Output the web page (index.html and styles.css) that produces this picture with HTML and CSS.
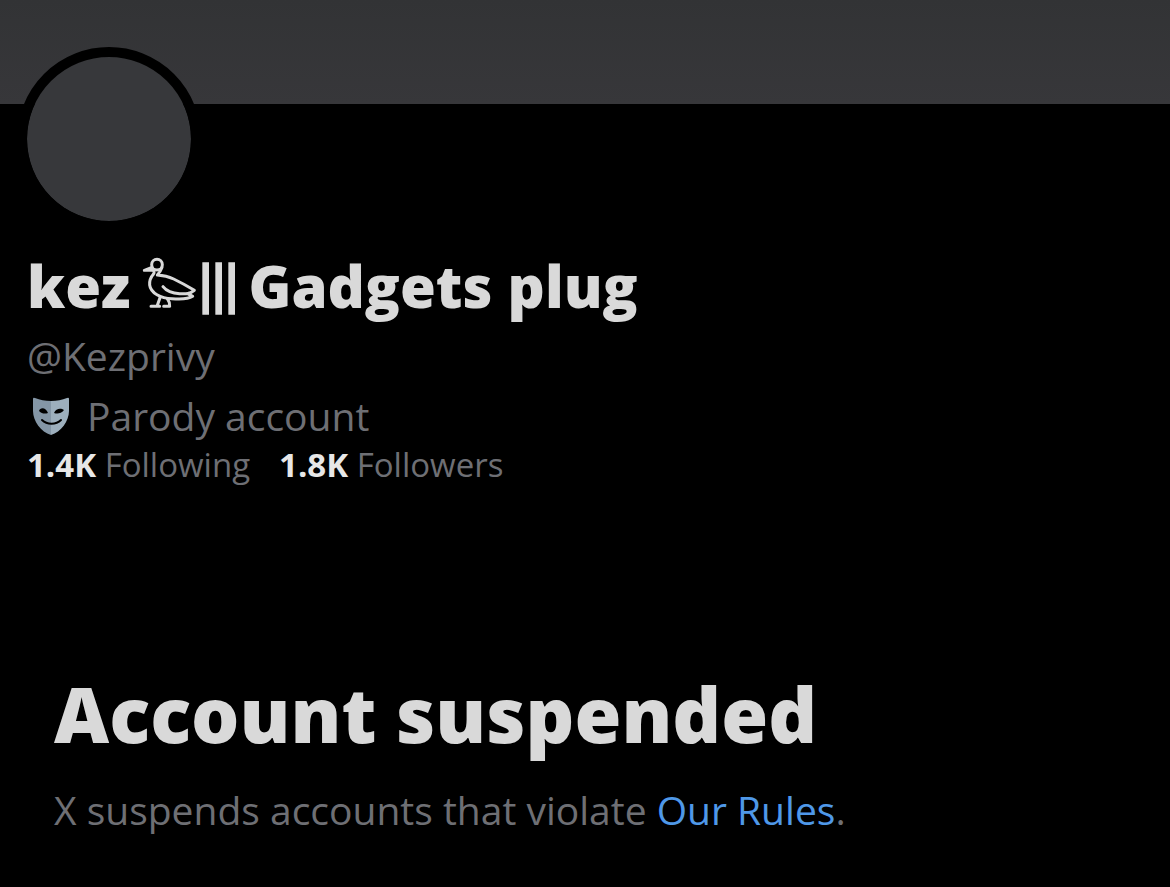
FILE: index.html
```
<!DOCTYPE html>
<html lang="en">
<head>
  <meta charset="UTF-8">
  <meta name="viewport" content="width=device-width, initial-scale=1.0">
  <title>kez Gadgets plug (@Kezprivy)</title>
  <link rel="stylesheet" href="styles.css">
</head>
<body>
  <div class="banner"></div>
  <main>
    <section class="profile">
      <div class="avatar"></div>
      <h1 class="name">
        <span>kez</span>
        <svg class="duck" viewBox="60 36 282 174" aria-hidden="true">
          <g fill="none" stroke="#d9d9d9" stroke-width="9" stroke-linecap="round" stroke-linejoin="round">
            <circle cx="105" cy="59" r="16" />
            <path d="M90 67L67 76L90 75C97 76 98 82 94 88C86 97 82 108 83 120C86 144 116 160 150 161C175 163 198 163 212 154L197 146C205 144 211 141 217 136C199 125 178 113 155 102C140 95 122 91 106 90C112 84 117 76 120 67" />
            <path d="M123 125C133 138 151 145 173 146C184 147 192 147 199 145" />
            <path d="M114 158L105 184H87M105 184H113M136 161C141 168 144 175 143 184H125" />
          </g>
          <path fill="#d9d9d9" d="M241 52H261V209H241ZM280 52H300V209H280ZM319 52H339V209H319Z" />
        </svg>
        <span>Gadgets plug</span>
      </h1>
      <p class="handle">@Kezprivy</p>
      <p class="label">
        <svg class="mask" viewBox="0 0 36 38" aria-hidden="true">
          <path fill="#8496a6" d="M0 2Q0 0 2 1C7 3 12 4 18 4V38C8 35 0 24 0 14Z" />
          <path fill="#9dafbd" d="M18 4C24 4 29 3 34 1Q36 0 36 2V14C36 24 28 35 18 38Z" />
          <path fill="#000" d="M6 14C7 10 13 10 15 16C12 17 9 17 6 14ZM21 16C23 11 28 11 31 13C28 17 24 17 21 16Z" />
          <path fill="none" stroke="#000" stroke-width="2" stroke-linecap="round" d="M9 23C14 28 23 28 28 23" />
        </svg>
        Parody account
      </p>
      <div class="stats">
        <a href="#"><strong>1.4K</strong> Following</a>
        <a href="#"><strong>1.8K</strong> Followers</a>
      </div>
    </section>
    <section class="notice">
      <h2>Account suspended</h2>
      <p>X suspends accounts that violate <a href="#">Our Rules</a>.</p>
    </section>
  </main>
</body>
</html>
```

FILE: styles.css
```
body {
  margin: 0;
  background-color: #000;
  color: #6e6f74;
  font-family: "Open Sans", sans-serif;
  font-size: 39px;
  line-height: 60px;
}

h1,
h2,
p {
  margin: 0;
}

a {
  text-decoration: none;
}

.banner {
  height: 104px;
  background: linear-gradient(#323335, #37373a);
}

.profile {
  padding: 0 27px;
}

.avatar {
  width: 164px;
  height: 164px;
  margin: -57px -10px 19px;
  border: 10px solid #000;
  border-radius: 50%;
  background-color: #37383b;
  background-clip: padding-box;
}

.name {
  display: flex;
  align-items: center;
  gap: 12px;
  color: #d9d9d9;
  font-size: 58px;
  font-weight: 800;
  line-height: 72px;
}

.duck {
  width: 94px;
  height: 58px;
}

.handle {
  margin-top: 4px;
}

.label {
  display: flex;
  align-items: center;
  gap: 18px;
  padding-left: 6px;
}

.mask {
  width: 36px;
  height: 38px;
}

.stats {
  display: flex;
  gap: 29px;
  font-size: 33px;
  line-height: 38px;
}

.stats a {
  color: inherit;
}

.stats strong {
  color: #e7e7e7;
}

.notice {
  padding: 182px 54px 47px;
}

.notice h2 {
  margin-bottom: 18px;
  color: #d9d9d9;
  font-size: 76px;
  font-weight: 800;
  line-height: 96px;
}

.notice a {
  color: #4f98e8;
}
```
